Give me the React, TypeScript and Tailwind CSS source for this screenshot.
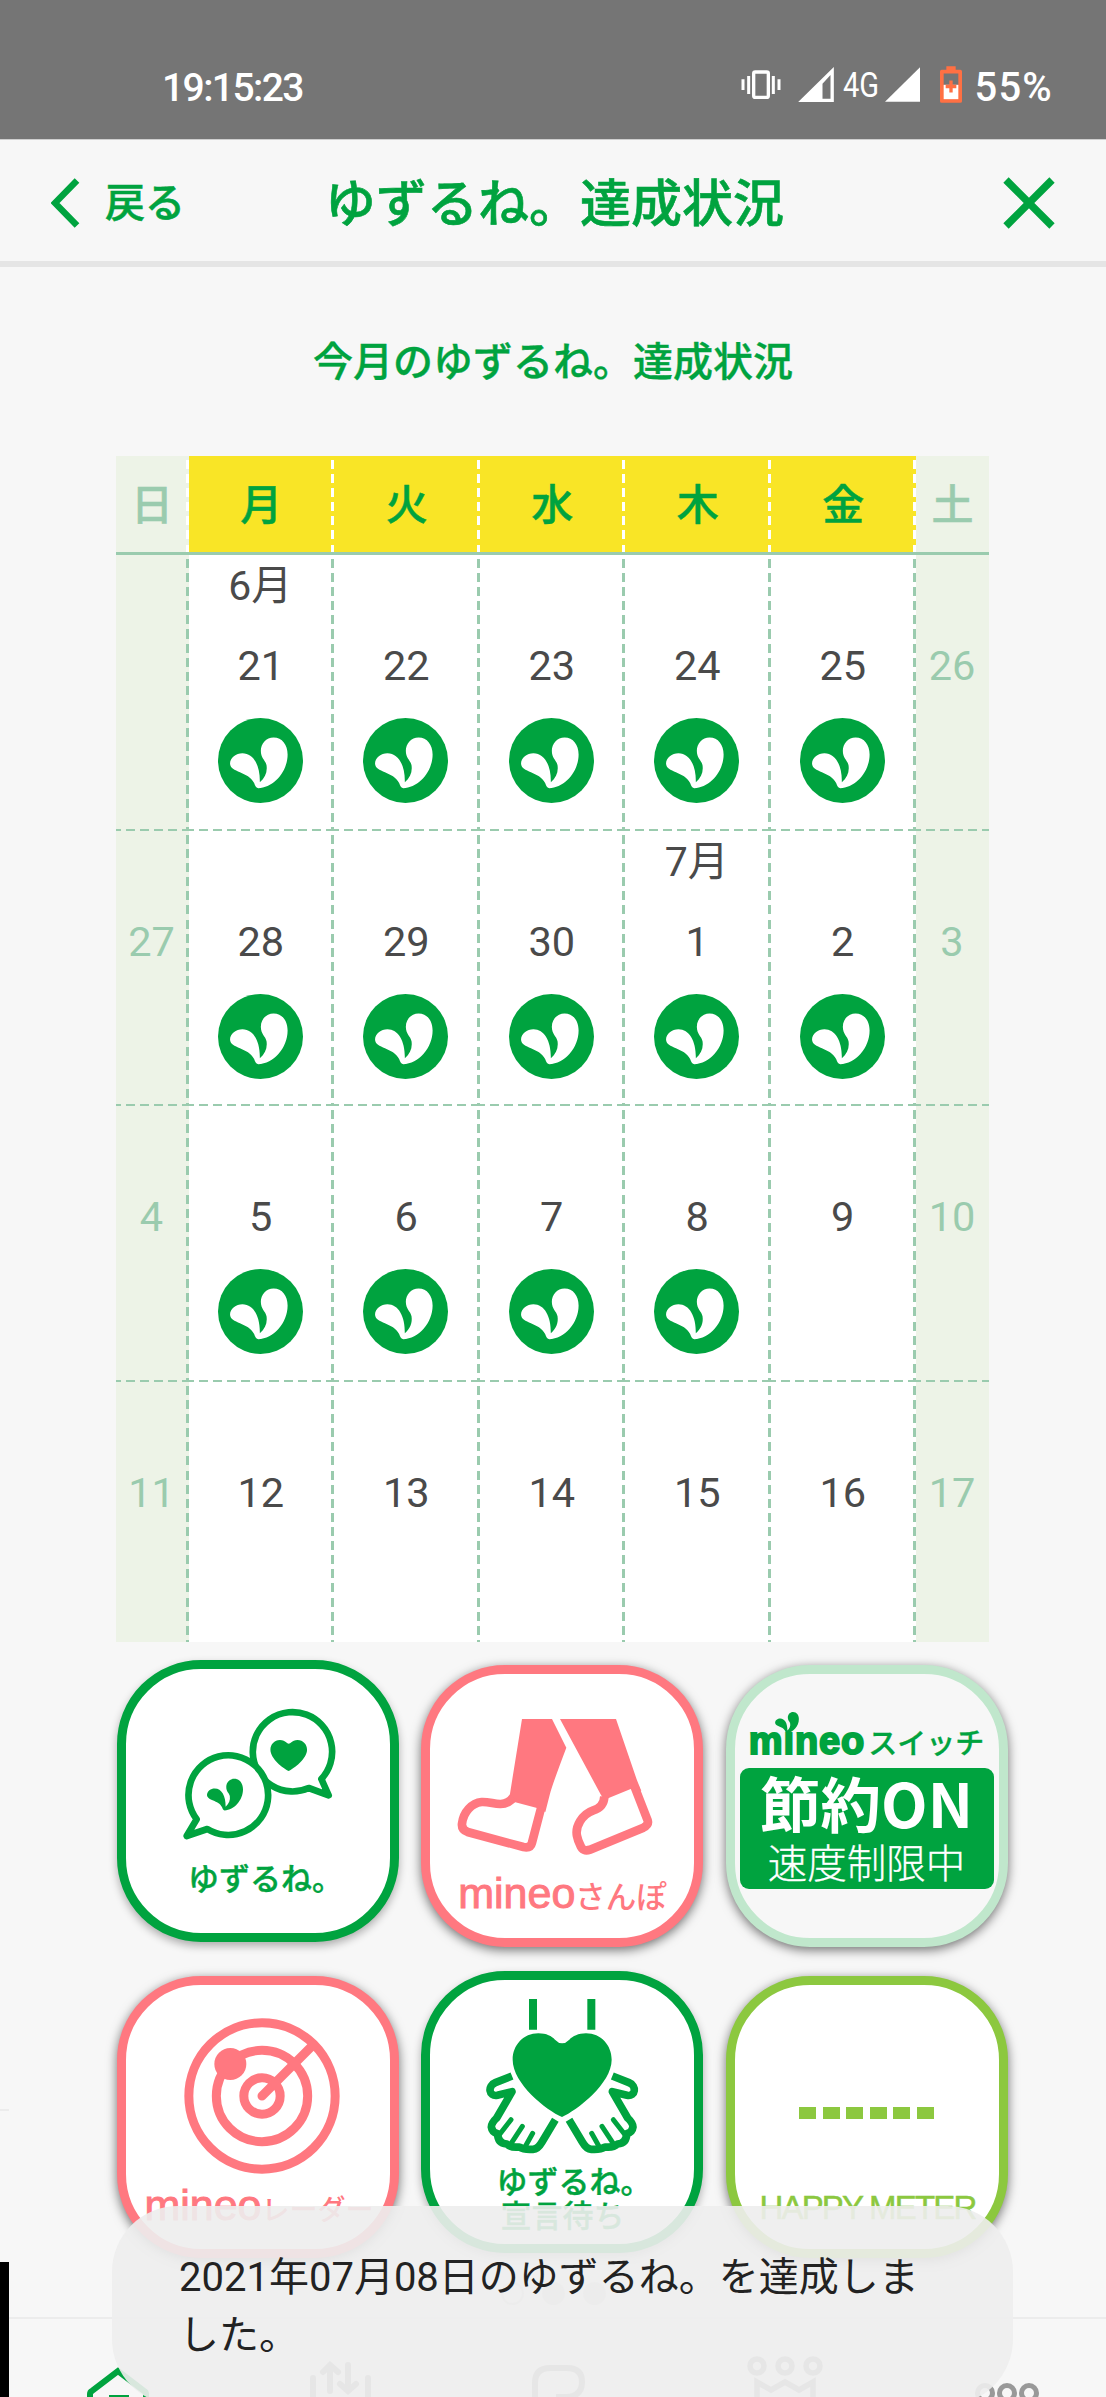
import type {ReactNode} from 'react';
import clsx from 'clsx';

const LEAF =
  'M120 210C113 208 110 200 108 194C92 160 36 163 36 136C36 118 54 105 73 105C106 105 126 141 125 192C141 178 148 161 145 141C142 126 128 121 128 98C128 76 144 58 166 58C192 58 208 80 208 109C208 161 166 208 120 210Z';
const HEART =
  'M486 500C440 480 338 400 338 328C338 285 370 249 415 249C440 249 455 258 465 268Q486 290 508 268C518 258 535 249 558 249C603 249 635 285 635 328C635 400 530 480 486 500Z';

const weekdays = ['日', '月', '火', '水', '木', '金', '土'];

type Day = {date?: number; month?: string; done?: boolean};

const weeks: Day[][] = [
  [
    {},
    {date: 21, month: '6月', done: true},
    {date: 22, done: true},
    {date: 23, done: true},
    {date: 24, done: true},
    {date: 25, done: true},
    {date: 26},
  ],
  [
    {date: 27},
    {date: 28, done: true},
    {date: 29, done: true},
    {date: 30, done: true},
    {date: 1, month: '7月', done: true},
    {date: 2, done: true},
    {date: 3},
  ],
  [
    {date: 4},
    {date: 5, done: true},
    {date: 6, done: true},
    {date: 7, done: true},
    {date: 8, done: true},
    {date: 9},
    {date: 10},
  ],
  [{date: 11}, {date: 12}, {date: 13}, {date: 14}, {date: 15}, {date: 16}, {date: 17}],
];

function StatusBar() {
  return (
    <div className="flex h-[139px] items-start justify-between bg-[#757575] pt-[66px] pr-[53px] pl-[162px] text-white">
      <span className="pt-px text-[39px] leading-[42px] font-medium tracking-[-1.6px]">19:15:23</span>
      <div className="flex items-start">
        <svg className="mt-1 mr-[17px] h-[30px] w-[40px]" viewBox="126 90 120 90" fill="none" stroke="currentColor">
          <rect x="164" y="96" width="44" height="76" rx="5" strokeWidth="10" />
          <path d="M132 118v32M149 108v54M223 108v54M240 118v32" strokeWidth="9" />
        </svg>
        <svg className="mt-px mr-[9px] h-[35px] w-[36px]" viewBox="294 82 107 105" fill="currentColor">
          <path fillRule="evenodd" d="M294 187L401 82V187ZM367 177H391V106L367 132Z" />
        </svg>
        <span className="inline-block w-[42px] origin-left scale-x-[0.83] text-[35px] leading-[40px]">4G</span>
        <svg className="mt-px mr-[20px] h-[35px] w-[35px]" viewBox="556 82 106 105" fill="currentColor">
          <path d="M556 187L662 82V187Z" />
        </svg>
        <svg className="mr-[12px] h-[37px] w-[22px]" viewBox="723 80 66 110">
          <path d="M742 80h28v11h14q5 0 5 5v89q0 5-5 5h-56q-5 0-5-5V96q0-5 5-5h14z" fill="#ff7043" />
          <path d="M734 102h44v34h-44z" fill="#757575" />
          <path d="M734 136h44v43h-44z" fill="#fff" />
          <path d="M751 123h10v13h11v10h-11v13h-10v-13h-11v-10h11z" fill="#ff7043" />
        </svg>
        <span className="pt-px text-[40px] leading-[42px] font-medium tracking-[1.2px]">55%</span>
      </div>
    </div>
  );
}

function Header() {
  return (
    <header className="grid h-[128px] grid-cols-[1fr_auto_1fr] items-center border-t border-b-[6px] border-t-[#cfcfcf] border-b-[#e5e5e5] pt-[5px] pr-[51px] pl-[51px] font-medium [-webkit-text-stroke:0.6px_currentColor]">
      <button className="flex items-center gap-[25px] text-[40px] leading-none">
        <svg className="h-[50px] w-[29px]" viewBox="0 0 29 50" fill="none" stroke="currentColor" strokeWidth="6.5">
          <path d="M26 2.500L4 25L26 47.500" />
        </svg>
        <span className="pt-[2px]">戻る</span>
      </button>
      <h1 className="pt-[2px] pl-[3px] text-[51px] leading-none">ゆずるね。達成状況</h1>
      <svg
        className="h-[52px] w-[52px] justify-self-end"
        viewBox="0 0 52 52"
        fill="none"
        stroke="currentColor"
        strokeWidth="7.5"
      >
        <path d="M3 3L49 49M49 3L3 49" />
      </svg>
    </header>
  );
}

function DayCell({day, weekend, lastRow, lastCol}: {day: Day; weekend: boolean; lastRow: boolean; lastCol: boolean}) {
  return (
    <div className={clsx('grid grid-cols-[1fr_3px]', weekend ? 'bg-[#edf3e7] text-[#9acbae]' : 'bg-white text-[#4a4a4a]')}>
      <div className={clsx('flex flex-col items-center pl-px', lastRow ? 'h-[260px]' : 'h-[273.5px]')}>
        <span className="h-[82px] pt-[10px] text-[41px] leading-[42px]">{day.month}</span>
        <span className="h-[81px] pt-[8px] pl-px text-[41.5px] leading-[42px]">{day.date}</span>
        {day.done && (
          <svg className="h-[85px] w-[85px]" viewBox="0 0 254 254">
            <circle cx="127" cy="127" r="127" fill="#00a33f" />
            <path d={LEAF} fill="#fff" />
          </svg>
        )}
      </div>
      {!lastCol && (
        <div className="bg-[repeating-linear-gradient(to_bottom,transparent_0_4px,#9acbae_4px_13px,transparent_13px_14.1px)]" />
      )}
      {!lastRow && (
        <div className="col-span-2 h-[2px] bg-[repeating-linear-gradient(to_right,#9acbae_0_5px,transparent_5px_10px,#9acbae_10px_14.1px)]" />
      )}
    </div>
  );
}

function Calendar() {
  return (
    <div className="ml-[115.500px] w-[873.500px]">
      <div className="grid h-[99px] grid-cols-[73px_repeat(5,145.5px)_73px] border-b-[3px] border-[#9acbae]">
        {weekdays.map((name, i) => {
          const weekend = i === 0 || i === 6;
          return (
            <div
              key={name}
              className={clsx('grid grid-cols-[1fr_3px]', weekend ? 'bg-[#edf3e7] text-[#9acbae]' : 'bg-[#f9e526]')}
            >
              <span className="self-center pt-[3px] pl-[3px] text-center text-[42px] leading-[46px] font-medium [-webkit-text-stroke:0.5px_currentColor]">
                {name}
              </span>
              {i < 6 && (
                <div className="bg-[repeating-linear-gradient(to_bottom,transparent_0_4px,#fff_4px_13px,transparent_13px_14.1px)]" />
              )}
            </div>
          );
        })}
      </div>
      {weeks.map((week, w) => (
        <div key={w} className="grid grid-cols-[73px_repeat(5,145.5px)_73px]">
          {week.map((day, i) => (
            <DayCell key={i} day={day} weekend={i === 0 || i === 6} lastRow={w === 3} lastCol={i === 6} />
          ))}
        </div>
      ))}
    </div>
  );
}

function Card({className, children}: {className: string; children: ReactNode}) {
  return (
    <div
      className={clsx(
        'flex h-[282px] w-[282px] flex-col items-center rounded-[84px] border-[9px] leading-none',
        className
      )}
    >
      {children}
    </div>
  );
}

function BubblesIcon() {
  return (
    <svg className="mt-[41px] h-[130px] w-[150px] shrink-0 overflow-visible" viewBox="249 207 450 390">
      <g fill="#fff" stroke="#00a33f" strokeWidth="20" strokeLinejoin="round">
        <path d="M626 441A119 119 0 1 1 664 414L686 463Z" />
        <path d="M290 535A119.500 119.500 0 1 1 322 564L260 585Z" />
      </g>
      <path d={HEART} fill="#00a33f" transform="translate(386.200 204.900) scale(0.37)" />
      <path d={LEAF} fill="#00a33f" transform="translate(298.400 376.600) scale(0.628)" />
    </svg>
  );
}

function LegsIcon() {
  return (
    <svg className="mt-[45px] mr-[14px] h-[136px] w-[196px] shrink-0" viewBox="171 236 588 408">
      <g fill="currentColor">
        <path d="M366 236H456L499 322Q458 430 450 460L436 515L411 503L346 486L335 492L329 466Z" />
        <path d="M480 236H648L711 420L724 452L692 446L628 472L614 480L603 464Z" />
      </g>
      <g fill="none" stroke="currentColor" strokeWidth="26">
        <path d="M340 470Q325 492 300 491C280 490 265 484 245 485C215 488 190 515 186 550Q184 568 203 575L370 620Q392 624 396 607L424 500" />
        <path d="M613 468Q612 500 580 510C545 522 525 560 531 587Q534 602 541 615Q549 636 570 628L730 562Q747 554 743 540L704 440" />
      </g>
    </svg>
  );
}

function RadarIcon() {
  return (
    <svg className="mt-[33px] mr-[-8px] h-[156px] w-[156px] shrink-0" viewBox="251 203 468 468">
      <g fill="none" stroke="currentColor" strokeWidth="27">
        <circle cx="485" cy="437" r="219.500" />
        <circle cx="485" cy="437" r="137" />
        <circle cx="485" cy="437" r="54.500" />
        <path d="M485 437L638 284" strokeLinecap="round" />
      </g>
      <circle cx="390" cy="341" r="48" fill="currentColor" />
    </svg>
  );
}

function Hand({flip}: {flip?: boolean}) {
  return (
    <g
      transform={flip ? 'translate(973 0) scale(-1 1)' : undefined}
      fill="none"
      stroke="currentColor"
      strokeLinejoin="round"
    >
      <path
        strokeWidth="23"
        d="M336 377L286 397C262 406 266 440 292 435L336 424L290 503Q274 518 274 530Q276 546 293 550Q293 578 320 581Q333 593 358 590Q372 599 399 597Q414 596 426 575L466 508"
      />
      <path strokeWidth="15" strokeLinecap="round" d="M333 508L298 553M367 528L333 580M398 549L377 586" />
    </g>
  );
}

function HandsIcon() {
  return (
    <svg className="mt-[19px] h-[155px] w-[154px] shrink-0" viewBox="255 146 462 465">
      <path d="M387 146h24v92h-24zM562 146h24v92h-24z" fill="currentColor" />
      <path d={HEART} fill="currentColor" />
      <Hand />
      <Hand flip />
    </svg>
  );
}

function MineoLabel({kana, className}: {kana: string; className: string}) {
  return (
    <div className={clsx('flex items-baseline whitespace-nowrap', className)}>
      <span className="font-['Liberation_Sans'] text-[43px] [-webkit-text-stroke:1px_currentColor]">mineo</span>
      <span className="font-medium">{kana}</span>
    </div>
  );
}

function Widgets() {
  return (
    <div className="mt-[18px] ml-[116.500px] grid grid-cols-[repeat(3,282px)] items-start gap-x-[22.500px]">
      <Card className="mb-[29px] border-[#00a33f] bg-white shadow-[0_4px_8px_rgba(0,0,0,0.3)]">
        <BubblesIcon />
        <span className="mt-[24px] pl-[16px] text-[31px] font-medium [-webkit-text-stroke:0.4px_currentColor]">
          ゆずるね。
        </span>
      </Card>
      <Card className="mt-[5.500px] border-[#ff7880] bg-white text-[#ff7880] shadow-[0_3px_11px_rgba(0,0,0,0.55)]">
        <LegsIcon />
        <MineoLabel kana="さんぽ" className="mt-[17px] pl-px text-[30.500px]" />
      </Card>
      <Card className="mt-[5.500px] border-[#c0e7cc] bg-[#f7f7f7] shadow-[0_3px_11px_rgba(0,0,0,0.55)]">
        <div className="relative mt-[48px] flex h-[46px] items-baseline whitespace-nowrap">
          <svg className="absolute -top-[10px] left-[26px] h-[21px] w-[24px]" viewBox="36 58 172 152">
            <path d={LEAF} fill="currentColor" />
          </svg>
          <span className="font-['Liberation_Sans'] text-[38px] font-bold tracking-[0.900px] [-webkit-text-stroke:2px_currentColor]">
            mıneo
          </span>
          <span className="ml-[3px] text-[29px] font-medium [-webkit-text-stroke:0.3px_currentColor]">スイッチ</span>
        </div>
        <div className="flex h-[121px] w-[254px] shrink-0 flex-col items-center rounded-[9px] bg-[#00a33f] whitespace-nowrap text-white">
          <span className="mt-[3px] font-['Noto_Sans_CJK_JP'] text-[60.500px] leading-[62px] font-bold">節約ON</span>
          <span className="mt-[12px] text-[39.500px] leading-[40px] font-light [-webkit-text-stroke:0.3px_currentColor]">
            速度制限中
          </span>
        </div>
      </Card>
      <Card className="mt-[5.500px] border-[#ff7880] bg-white text-[#ff7880] shadow-[0_3px_11px_rgba(0,0,0,0.55)]">
        <RadarIcon />
        <MineoLabel kana="レーダー" className="mt-[10px] pl-[3px] text-[28px]" />
      </Card>
      <Card className="border-[#00a33f] bg-white shadow-[0_4px_8px_rgba(0,0,0,0.3)]">
        <HandsIcon />
        <span className="mt-[12px] text-[31px] leading-[34px] font-medium [-webkit-text-stroke:0.4px_currentColor]">
          <span className="block pl-[24px]">ゆずるね。</span>
          <span className="block pl-[28px]">宣言待ち</span>
        </span>
      </Card>
      <Card className="mt-[5.500px] border-[#8cc83f] bg-white text-[#8cc83f] shadow-[0_3px_11px_rgba(0,0,0,0.55)]">
        <div className="mt-[122px] flex gap-[6.600px]">
          {[0, 1, 2, 3, 4, 5].map((i) => (
            <span key={i} className="h-[12px] w-[17px] bg-[#8cc83f]" />
          ))}
        </div>
        <span className="mt-[72px] pl-[2px] font-['Liberation_Sans'] text-[33px] tracking-[-1.8px] whitespace-nowrap [-webkit-text-stroke:0.5px_currentColor]">
          HAPPY METER
        </span>
      </Card>
    </div>
  );
}

function BottomNav() {
  return (
    <nav className="grid h-[80px] grid-cols-[repeat(5,222px)] justify-items-center overflow-hidden border-t-2 border-[#ececec] pl-2 text-[#999]">
      <svg
        className="mt-[47px] mr-[2px] h-[60px] w-[66px] text-[#00a33f]"
        viewBox="0 0 66 60"
        fill="none"
        stroke="currentColor"
      >
        <path d="M5 60V28Q5 26 7 25L33 5L59 25Q61 26 61 28V60" strokeWidth="6" />
        <path d="M24 32H44" strokeWidth="6" />
      </svg>
      <svg className="mt-[41px] h-[60px] w-[62px]" viewBox="0 0 62 60" fill="none" stroke="currentColor" strokeWidth="6">
        <path d="M3 60V18M58 60V18M20 31V5M13 12L20 5L28 12M38 5V31M30 24L38 31L46 24" strokeLinecap="round" />
      </svg>
      <svg className="mt-[46px] mr-[8px] h-[60px] w-[54px]" viewBox="0 0 54 60" fill="none" stroke="currentColor" strokeWidth="6">
        <path d="M3 60V18Q3 3 18 3H35Q50 3 50 17T35 32H24" />
      </svg>
      <svg className="mt-[36px] h-[60px] w-[76px]" viewBox="0 0 76 60" fill="none" stroke="currentColor" strokeWidth="5.500">
        <circle cx="10" cy="11" r="7" />
        <circle cx="38" cy="11" r="7" />
        <circle cx="66" cy="11" r="7" />
        <path d="M10 60V27L24 35L38 27L52 35L66 27V60" />
      </svg>
      <svg className="mt-[63px] h-[30px] w-[66px]" viewBox="0 0 66 30" fill="none" stroke="currentColor" strokeWidth="5">
        <circle cx="11" cy="11" r="7.500" />
        <circle cx="33" cy="11" r="7.500" />
        <circle cx="55" cy="11" r="7.500" />
      </svg>
    </nav>
  );
}

export default function App() {
  return (
    <div className="relative flex h-[2397px] w-[1106px] flex-col overflow-hidden bg-[#f7f7f7] font-[Roboto,'Noto_Sans_CJK_JP',sans-serif] text-[#00a33f]">
      <StatusBar />
      <Header />
      <h2 className="mt-[76px] mb-[73px] text-center text-[40px] leading-[40px] font-medium [-webkit-text-stroke:0.4px_currentColor]">
        今月のゆずるね。達成状況
      </h2>
      <Calendar />
      <Widgets />
      <div className="mt-auto mb-[12px] flex justify-center gap-[18px]">
        <span className="h-[23px] w-[23px] rounded-full border-2 border-[#ddd]" />
        <span className="h-[23px] w-[23px] rounded-full bg-[#ddd]" />
        <span className="h-[23px] w-[23px] rounded-full bg-[#ddd]" />
      </div>
      <BottomNav />

      {/* edge of the page underneath */}
      <div className="absolute top-[2109px] left-0 h-[2px] w-[9px] bg-[#ececec]" />
      <div className="absolute top-[2262px] left-0 h-[135px] w-[9px] bg-black" />

      <div className="absolute top-[2206px] left-[112px] h-[199px] w-[901px] rounded-[66px] bg-[#ededed]/91 pt-[43px] pl-[67px] text-[40px] leading-[58px] text-[#222]">
        2021年07月08日のゆずるね。を達成しま
        <br />
        した。
      </div>
    </div>
  );
}
